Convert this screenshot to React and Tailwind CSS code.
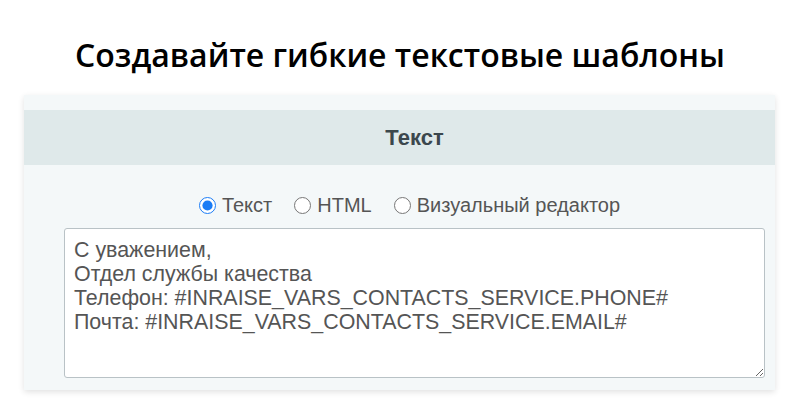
import { useState } from 'react'

export default function App() {
  const [mode, setMode] = useState('text')
  const [value, setValue] = useState(
    'С уважением,\nОтдел службы качества\nТелефон: #INRAISE_VARS_CONTACTS_SERVICE.PHONE#\nПочта: #INRAISE_VARS_CONTACTS_SERVICE.EMAIL#'
  )

  const options = [
    { id: 'text', label: 'Текст' },
    { id: 'html', label: 'HTML' },
    { id: 'visual', label: 'Визуальный редактор' },
  ]

  return (
    <div className="w-[800px] h-[411px] bg-white overflow-hidden">
      <h1 className="pt-[35px] text-center text-[32px] leading-[40px] font-semibold text-black font-['Open_Sans',sans-serif]">
        Создавайте гибкие текстовые шаблоны
      </h1>

      <div className="mx-[24px] mt-[20px] w-[751px] h-[295px] bg-[#f4f8f9] pt-[15px] shadow-[0_2px_6px_rgba(0,0,0,0.12)] font-['Liberation_Sans',Arial,sans-serif]">
        <div className="h-[55px] bg-[#dfe9ea] flex items-center justify-center pl-[30px]">
          <span className="text-[22px] font-bold text-[#3b474d]">Текст</span>
        </div>

        <div className="flex justify-center items-center gap-[22px] pt-[28px] pl-[20px] text-[20px] leading-[24px] text-[#555]">
          {options.map((o) => (
            <label key={o.id} className="flex items-center gap-[6px] cursor-pointer">
              <input
                type="radio"
                name="mode"
                checked={mode === o.id}
                onChange={() => setMode(o.id)}
                className="w-[17px] h-[17px] m-0 accent-[#1a7cf5]"
              />
              <span>{o.label}</span>
            </label>
          ))}
        </div>

        <div className="px-[40px] pt-[11px]">
          <textarea
            value={value}
            onChange={(e) => setValue(e.target.value)}
            className="block w-[701px] h-[150px] rounded-[3px] border border-[#b9c2c6] bg-white px-[9px] pt-[9px] pb-[5px] text-[21.4px] leading-[24px] text-[#555] outline-none"
          />
        </div>
      </div>
    </div>
  )
}
